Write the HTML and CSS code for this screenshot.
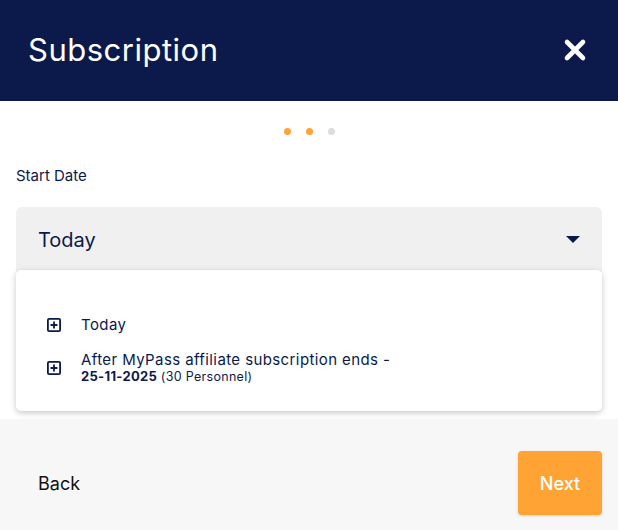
FILE: index.html
```html
<!DOCTYPE html>
<html>
<head>
<meta charset="utf-8">
<link rel="stylesheet" href="styles.css">
</head>
<body>
<div class="modal">
  <header class="header">
    <h1 class="title">Subscription</h1>
    <button class="close" aria-label="Close">
      <svg width="24" height="24" viewBox="0 0 24 24"><path d="M4 4 L20 20 M20 4 L4 20" stroke="#fff" stroke-width="4.6" stroke-linecap="round"/></svg>
    </button>
  </header>
  <main class="body">
    <div class="dots">
      <span class="dot on"></span><span class="dot on"></span><span class="dot"></span>
    </div>
    <label class="label">Start Date</label>
    <div class="field">
      <div class="select">
        <span class="select-value">Today</span>
        <svg class="caret" width="14" height="8" viewBox="0 0 14 8"><path d="M0 0 H14 L7 7 Z" fill="#0b1a4b"/></svg>
      </div>
      <div class="menu">
        <div class="option">
          <svg class="plus" width="14" height="14" viewBox="0 0 14 14"><rect x="0.9" y="0.9" width="12.2" height="12.2" rx="1.2" fill="none" stroke="#0b1a4b" stroke-width="1.8"/><path d="M7 3.6 V10.4 M3.6 7 H10.4" stroke="#0b1a4b" stroke-width="1.8"/></svg>
          <span class="opt-text">Today</span>
        </div>
        <div class="option">
          <svg class="plus" width="14" height="14" viewBox="0 0 14 14"><rect x="0.9" y="0.9" width="12.2" height="12.2" rx="1.2" fill="none" stroke="#0b1a4b" stroke-width="1.8"/><path d="M7 3.6 V10.4 M3.6 7 H10.4" stroke="#0b1a4b" stroke-width="1.8"/></svg>
          <div class="opt-text">
            <div>After MyPass affiliate subscription ends -</div>
            <div class="sub"><b>25-11-2025</b> (30 Personnel)</div>
          </div>
        </div>
      </div>
    </div>
  </main>
  <footer class="footer">
    <button class="back">Back</button>
    <button class="next">Next</button>
  </footer>
</div>
</body>
</html>
```

FILE: styles.css
```css
* { box-sizing: border-box; }
html, body { margin: 0; padding: 0; }
body {
  font-family: Inter, Roboto, "Noto Sans", sans-serif;
  background: #fff;
  width: 618px;
  height: 530px;
  overflow: hidden;
}
.modal {
  display: flex;
  flex-direction: column;
  height: 530px;
}
.header {
  height: 101px;
  background: #0b1a4b;
  display: flex;
  align-items: center;
  justify-content: space-between;
  padding: 0 28px 2px 28px;
  flex-shrink: 0;
}
.title {
  margin: 0;
  color: #fff;
  font-weight: 400;
  font-size: 31px;
  letter-spacing: 0.5px;
}
.close {
  background: none;
  border: 0;
  padding: 0;
  margin-right: 3px;
  display: flex;
}
.body {
  flex: 1;
  padding: 0 16px;
  display: flex;
  flex-direction: column;
}
.dots {
  display: flex;
  justify-content: center;
  gap: 15px;
  margin-top: 27px;
  height: 7px;
}
.dot {
  width: 7px;
  height: 7px;
  border-radius: 50%;
  background: #dcdcdc;
}
.dot.on { background: #ffa434; }
.label {
  margin-top: 32px;
  font-size: 15px;
  color: #0b1a4b;
  line-height: 18px;
}
.field {
  position: relative;
  margin-top: 22px;
}
.select {
  height: 65px;
  background: #f0f0f0;
  border-radius: 6px 6px 0 0;
  display: flex;
  align-items: center;
  justify-content: space-between;
  padding: 0 22px 0 22px;
}
.select-value {
  font-size: 20px;
  color: #0b1a4b;
}
.caret { margin-top: 1px; }
.menu {
  position: absolute;
  left: 0;
  right: 0;
  top: 63px;
  height: 141px;
  background: #fff;
  border-radius: 5px;
  box-shadow: 0 2px 6px rgba(0,0,0,0.22);
  padding: 46px 0 0 31px;
  display: flex;
  flex-direction: column;
  gap: 17px;
}
.option {
  display: flex;
  align-items: center;
  gap: 20px;
  color: #0b1a4b;
}
.opt-text {
  font-size: 15px;
  line-height: 18px;
  letter-spacing: 0.4px;
}
.sub {
  font-size: 12.5px;
  line-height: 15px;
  letter-spacing: 0.3px;
}
.sub b { font-weight: 700; font-size: 13px; }
.footer {
  height: 111px;
  background: #f7f7f7;
  display: flex;
  align-items: center;
  justify-content: space-between;
  padding: 17px 16px 0 38px;
  flex-shrink: 0;
}
.back {
  background: none;
  border: 0;
  padding: 0;
  font-family: inherit;
  font-size: 18px;
  color: #111;
}
.next {
  width: 84px;
  height: 64px;
  background: #ffa434;
  border: 0;
  border-radius: 4px;
  color: #fff;
  font-family: inherit;
  font-size: 18px;
  font-weight: 500;
  box-shadow: 0 1px 3px rgba(0,0,0,0.15);
}
```
